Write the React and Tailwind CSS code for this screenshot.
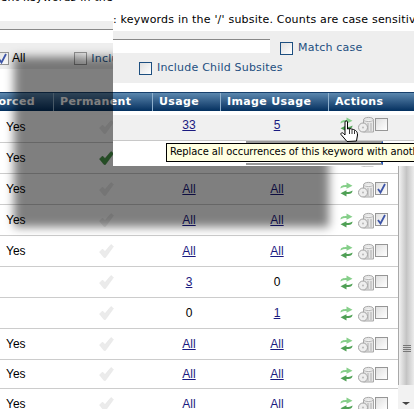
const COLS = 'grid grid-cols-[53px_99px_68px_108px_70px] items-center'

const ROWS = [
  { enforced: 'Yes', usage: '', image: '', h: 'h-[32px]' },
  { enforced: 'Yes', usage: '', image: '', green: true, h: 'h-[31px]' },
  { enforced: 'Yes', usage: 'All', image: 'All', checked: true, h: 'h-[31px]' },
  { enforced: 'Yes', usage: 'All', image: 'All', checked: true, h: 'h-[31px]' },
  { enforced: 'Yes', usage: 'All', image: 'All', h: 'h-[31px]' },
  { enforced: '', usage: '3', image: '0', h: 'h-[31px]' },
  { enforced: '', usage: '0', image: '1', h: 'h-[31px]' },
  { enforced: 'Yes', usage: 'All', image: 'All', h: 'h-[31px]' },
  { enforced: 'Yes', usage: 'All', image: 'All', h: 'h-[29px]' },
  { enforced: 'Yes', usage: 'All', image: 'All', h: 'h-[31px]' },
]

function CheckMark({ green }) {
  return (
    <svg width="15" height="14" viewBox="0 0 15 14">
      <path
        d="M0.5 8 L3.5 5 L6 7.5 L12 0.5 L14.5 2.5 L6.5 13.5 L5 13.5 Z"
        fill={green ? '#4a9a4a' : '#ebebeb'}
        stroke={green ? '#3c7f3c' : '#e4e4e4'}
        strokeWidth="0.5"
      />
    </svg>
  )
}

function SyncIcon() {
  return (
    <svg width="13" height="15" viewBox="0 0 13 15">
      <path d="M0.5 6.5 C0.5 3.5 3 3 6.5 3 L6.5 0.5 L12.5 3.7 L6.5 6.8 L6.5 5 C4 5 2.5 5.2 0.5 6.5 Z" fill="#86cf8a" />
      <path d="M12.5 8.5 C12.5 11.5 10 12 6.5 12 L6.5 14.5 L0.5 11.3 L6.5 8.2 L6.5 10 C9 10 10.5 9.8 12.5 8.5 Z" fill="#4fa055" />
    </svg>
  )
}

function TrashIcon() {
  return (
    <svg width="16" height="17" viewBox="0 0 16 17">
      <path d="M5.5 4 C5.5 0.5 15.5 0.5 15.5 4 L15.5 16 L5.5 16 Z" fill="#e6e6e6" stroke="#a8a8a8" />
      <path d="M5.5 4 C7 6 14 6 15.5 4" fill="#f4f4f4" stroke="#b4b4b4" />
      <path d="M10 7 L10 15 M13 7 L13 15" stroke="#b0b0b0" />
      <circle cx="5" cy="11.5" r="4.5" fill="#eeeeee" stroke="#a4a4a4" />
      <circle cx="5" cy="11.5" r="1" fill="#b8b8b8" />
    </svg>
  )
}

function Box({ checked, blue, className = '' }) {
  return (
    <span
      className={`flex h-[13px] w-[13px] shrink-0 items-center justify-center border bg-gradient-to-br from-[#e0e0e0] to-white ${
        blue ? 'border-[#1d4f80]' : 'border-[#969696]'
      } ${className}`}
    >
      {checked && (
        <svg width="11" height="11" viewBox="0 0 11 11">
          <path d="M2 6 L4.5 9.5 L9 1" fill="none" stroke="#3d55a8" strokeWidth="1.8" />
        </svg>
      )}
    </span>
  )
}

function Actions({ checked }) {
  return (
    <div className="flex items-center pl-[12px]">
      <SyncIcon />
      <span className="ml-[5px] flex">
        <TrashIcon />
      </span>
      <Box checked={checked} className="ml-[1px] -mt-[1px]" />
    </div>
  )
}

function Count({ value }) {
  if (!value) return <span />
  const plain = value === '0'
  return (
    <span className={`pl-[6px] text-center ${plain ? 'text-black' : 'text-[#1a1a80] underline'}`}>{value}</span>
  )
}

function Row({ row }) {
  return (
    <div className={`${COLS} ${row.h} shrink-0 border-b border-[#cccccc] text-[12px] text-black`}>
      <span className="pl-[6px]">{row.enforced}</span>
      <span className="flex pl-[46px]">
        <CheckMark green={row.green} />
      </span>
      <Count value={row.usage} />
      <Count value={row.image} />
      <Actions checked={row.checked} />
    </div>
  )
}

function HeaderCell({ children, right }) {
  return (
    <div
      className={`flex h-full items-center overflow-hidden whitespace-nowrap border-l border-[#8fb0cc] pl-[6px] first:border-l-0 ${
        right ? 'justify-end pl-0 pr-[18px]' : ''
      }`}
    >
      {children}
    </div>
  )
}

function TableHeader() {
  return (
    <div className="grid h-[19px] w-[414px] shrink-0 grid-cols-[53px_99px_68px_108px_86px] border-t border-[#17406c] bg-gradient-to-b from-[#5c88ae] to-[#02305f] font-['DejaVu_Sans'] text-[11px] font-bold tracking-[0.35px] text-white">
      <HeaderCell right>Enforced</HeaderCell>
      <HeaderCell>Permanent</HeaderCell>
      <HeaderCell>Usage</HeaderCell>
      <HeaderCell>Image Usage</HeaderCell>
      <HeaderCell>Actions</HeaderCell>
    </div>
  )
}

function Popup() {
  return (
    <div className="absolute left-[113px] right-0 top-0 flex h-[166px] flex-col overflow-hidden bg-white font-['DejaVu_Sans'] text-[11px] tracking-[0.2px]">
      <div className="flex h-[31px] shrink-0 items-end whitespace-nowrap pb-[4px] leading-[14px] text-black">
        : keywords in the '/' subsite. Counts are case sensitive
      </div>
      <div className="flex h-[52px] shrink-0 flex-col bg-[#eeeeee] pt-[8px] text-[#1d4f80]">
        <div className="flex items-start">
          <span className="h-[14px] w-[157px] border-t border-[#888888] bg-white" />
          <Box blue className="ml-[10px] mt-[3px]" />
          <span className="ml-[5px] mt-[1px] leading-[16px]">Match case</span>
        </div>
        <div className="mt-[4px] flex items-center pl-[26px]">
          <Box blue />
          <span className="ml-[5px] leading-[16px]">Include Child Subsites</span>
        </div>
      </div>
      <div className="h-[9px] shrink-0" />
      <div className="-ml-[113px] shrink-0">
        <TableHeader />
      </div>
      <div className="h-[4px] shrink-0" />
      <div className="-ml-[113px] h-[26px] w-[414px] shrink-0 border-b border-[#c8c8c8] bg-[#f0f0f0] pb-[6px] font-['Liberation_Sans'] tracking-normal">
        <div className={`${COLS} h-full text-[12px]`}>
          <span />
          <span />
          <Count value="33" />
          <Count value="5" />
          <Actions />
        </div>
      </div>
      <div className="relative flex-1">
        <span className="absolute left-[133px] top-0 h-[24px] w-[137px] border-y-2 border-r-2 border-[#9a9a9a] border-r-[#2a5fc0]" />
      </div>
    </div>
  )
}

function Tooltip() {
  return (
    <div className="absolute left-[166px] top-[143px] flex h-[19px] w-[260px] items-center whitespace-nowrap border border-black bg-[#ffffe1] pl-[3px] font-['DejaVu_Sans_Condensed','DejaVu_Sans',sans-serif] text-[11px] tracking-[-0.05px] text-black">
      Replace all occurrences of this keyword with another
    </div>
  )
}

function HandCursor() {
  return (
    <svg className="absolute left-[340px] top-[120px]" width="19" height="23" viewBox="0 0 19 23">
      <path
        d="M5 2 C5 0.5 7.5 0.5 7.5 2 L7.5 9 L9.5 8.5 L11.5 9 L13.5 9.5 L15.5 10.5 C17 11.5 17.5 13 17.5 15 L16.5 21 L7 21.5 L1 14.5 C0.5 13 2 12 3.5 13.5 L5 15 Z"
        fill="white"
        stroke="black"
      />
      <path d="M9.5 9 L9.5 14 M12 9.5 L12 14 M14.5 10.5 L14.5 14" stroke="black" strokeWidth="0.8" />
    </svg>
  )
}

function Scrollbar() {
  return (
    <div className="flex w-[16px] shrink-0 flex-col">
      <div className="relative flex-1 border-l border-[#a8a8a8] bg-gradient-to-r from-[#f2f2f2] via-[#c4c4c4] to-[#ececec]">
        <div className="absolute left-[4px] top-[345px] flex w-[8px] flex-col gap-[1px]">
          <span className="h-[1px] bg-[#777777]" />
          <span className="h-[1px] bg-[#777777]" />
          <span className="h-[1px] bg-[#777777]" />
          <span className="h-[1px] bg-[#777777]" />
        </div>
      </div>
      <div className="flex h-[24px] shrink-0 items-end justify-center bg-[#f2f2f2] pb-[4px]">
        <span className="h-0 w-0 border-x-[4px] border-t-[3px] border-x-transparent border-t-[#444444]" />
      </div>
    </div>
  )
}

export default function App() {
  return (
    <div className="relative flex h-[409px] w-[414px] overflow-hidden bg-white font-['Liberation_Sans',sans-serif]">
      <div className="flex w-[398px] shrink-0 flex-col">
        <div className="flex h-[21px] w-[113px] shrink-0 justify-end overflow-hidden whitespace-nowrap font-['DejaVu_Sans'] text-[11px] leading-[14px] tracking-[0.2px] text-black">
          <span className="-mt-[9px]">ment keywords in the</span>
        </div>
        <div className="h-[9px] shrink-0 border-b border-[#888888] bg-[#eeeeee]" />
        <div className="h-[13px] shrink-0" />
        <div className="flex h-[26px] shrink-0 items-end bg-[#eeeeee] pb-[4px]">
          <Box checked className="-ml-[4px]" />
          <span className="ml-[3px] text-[12px] leading-[13px] text-black">All</span>
          <Box className="ml-[49px]" />
          <span className="ml-[4px] font-['DejaVu_Sans'] text-[11px] leading-[13px] tracking-[0.2px] text-[#1d4f80]">
            Include
          </span>
        </div>
        <div className="h-[23px] shrink-0" />
        <TableHeader />
        {ROWS.map((row, i) => (
          <Row key={i} row={row} />
        ))}
      </div>
      <Scrollbar />
      {/* drop shadow of the floating window */}
      <div className="absolute left-[14px] top-[57px] h-[170px] w-[315px] bg-black/50 blur-[5px]" />
      <Popup />
      <Tooltip />
      <HandCursor />
    </div>
  )
}
